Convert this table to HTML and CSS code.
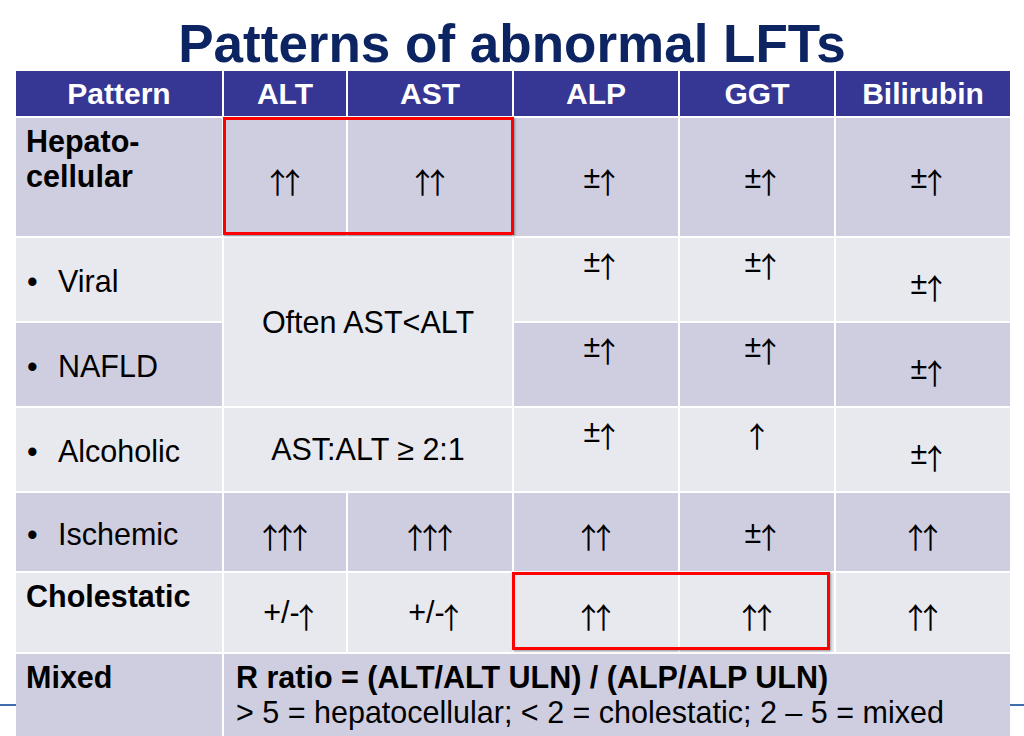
FILE: index.html
```html
<!DOCTYPE html>
<html lang="en">
<head>
<meta charset="utf-8">
<title>Patterns of abnormal LFTs</title>
<link rel="stylesheet" href="styles.css">
</head>
<body>
<div class="slide">
  <div class="rule"></div>
  <h1 class="title">Patterns of abnormal LFTs</h1>
  <div class="wrap">
    <table class="lft">
      <colgroup>
        <col class="w1"><col class="w2"><col class="w3"><col class="w4"><col class="w5"><col class="w6">
      </colgroup>
      <tr class="r-hdr">
        <th>Pattern</th><th>ALT</th><th>AST</th><th>ALP</th><th>GGT</th><th>Bilirubin</th>
      </tr>
      <tr class="r-hep d">
        <td class="lab">Hepato-<br>cellular</td>
        <td class="c sh"><span class="ar">↑↑</span></td>
        <td class="c sh"><span class="ar">↑↑</span></td>
        <td class="c"><span class="pm">±</span><span class="ar">↑</span></td>
        <td class="c"><span class="pm">±</span><span class="ar">↑</span></td>
        <td class="c"><span class="pm">±</span><span class="ar">↑</span></td>
      </tr>
      <tr class="r-mid l">
        <td class="bul"><span class="dot">•</span>Viral</td>
        <td class="c" colspan="2" rowspan="2">Often AST&lt;ALT</td>
        <td class="ct"><span class="pm">±</span><span class="ar">↑</span></td>
        <td class="ct"><span class="pm">±</span><span class="ar">↑</span></td>
        <td class="cb"><span class="pm">±</span><span class="ar">↑</span></td>
      </tr>
      <tr class="r-mid d">
        <td class="bul"><span class="dot">•</span>NAFLD</td>
        <td class="ct"><span class="pm">±</span><span class="ar">↑</span></td>
        <td class="ct"><span class="pm">±</span><span class="ar">↑</span></td>
        <td class="cb"><span class="pm">±</span><span class="ar">↑</span></td>
      </tr>
      <tr class="r-mid l">
        <td class="bul"><span class="dot">•</span>Alcoholic</td>
        <td class="c" colspan="2">AST:ALT ≥ 2:1</td>
        <td class="ct"><span class="pm">±</span><span class="ar">↑</span></td>
        <td class="ct sh"><span class="ar">↑</span></td>
        <td class="cb"><span class="pm">±</span><span class="ar">↑</span></td>
      </tr>
      <tr class="r-isc d">
        <td class="bul"><span class="dot">•</span>Ischemic</td>
        <td class="c sh"><span class="ar">↑↑↑</span></td>
        <td class="c sh"><span class="ar">↑↑↑</span></td>
        <td class="c sh"><span class="ar">↑↑</span></td>
        <td class="c"><span class="pm">±</span><span class="ar">↑</span></td>
        <td class="c sh"><span class="ar">↑↑</span></td>
      </tr>
      <tr class="r-cho l">
        <td class="lab">Cholestatic</td>
        <td class="c">+/<span class="hy">-</span><span class="ar">↑</span></td>
        <td class="c">+/<span class="hy">-</span><span class="ar">↑</span></td>
        <td class="c sh"><span class="ar">↑↑</span></td>
        <td class="c sh"><span class="ar">↑↑</span></td>
        <td class="c sh"><span class="ar">↑↑</span></td>
      </tr>
      <tr class="r-mix d">
        <td class="lab">Mixed</td>
        <td class="mix" colspan="5"><b>R ratio = (ALT/ALT ULN) / (ALP/ALP ULN)</b><br>&gt; 5 = hepatocellular; &lt; 2 = cholestatic; 2 – 5 = mixed</td>
      </tr>
    </table>
    <div class="hl hl-1"></div>
    <div class="hl hl-2"></div>
  </div>
</div>
</body>
</html>
```

FILE: styles.css
```css
html, body {
  margin: 0;
  padding: 0;
  background: #ffffff;
}

body {
  font-family: "Liberation Sans", Arial, Helvetica, sans-serif;
}

.slide {
  position: relative;
  width: 1024px;
  height: 736px;
  overflow: hidden;
}

.rule {
  position: absolute;
  left: 0;
  right: 0;
  top: 704px;
  height: 2px;
  background: #3f6fae;
}

.title {
  margin: 0;
  padding-top: 17px;
  height: 54px;
  line-height: 54px;
  text-align: center;
  font-size: 53px;
  font-weight: bold;
  color: #0c2461;
}

.wrap {
  position: relative;
  z-index: 1;
  margin-left: 16px;
  width: 994px;
}

.lft {
  border-collapse: collapse;
  border-style: hidden;
  table-layout: fixed;
  width: 994px;
  font-size: 30.5px;
  color: #000;
}

.w1 { width: 207px; }
.w2 { width: 124px; }
.w3 { width: 166px; }
.w4 { width: 166px; }
.w5 { width: 156px; }
.w6 { width: 175px; }

.lft th,
.lft td {
  border: 2px solid #ffffff;
  padding: 0;
  line-height: 35px;
}

.lft th {
  background: #363795;
  color: #ffffff;
  font-size: 30px;
  font-weight: bold;
  text-align: center;
  vertical-align: middle;
}

.r-hdr { height: 46px; }
.r-hep { height: 120px; }
.r-mid { height: 85px; }
.r-isc { height: 80px; }
.r-cho { height: 81px; }
.r-mix { height: 90px; }

.d td { background: #cfcee0; }
.l td { background: #e8e8ef; }

.lab {
  vertical-align: top;
  text-align: left;
  font-weight: bold;
  padding: 6px 0 0 10px !important;
}

.bul {
  vertical-align: middle;
  text-align: left;
  padding: 4px 0 0 11px !important;
}

.dot {
  display: inline-block;
  width: 31px;
}

.c {
  text-align: center;
  vertical-align: middle;
}

.ct {
  text-align: center;
  vertical-align: top;
  padding-top: 6px !important;
}

.cb {
  text-align: center;
  vertical-align: middle;
  padding-top: 8px !important;
}

/* cells holding only arrows: balance the arrow glyph's right-side ink */
.sh {
  padding-right: 14px !important;
}

.pm {
  letter-spacing: -7px;
}

.hy {
  letter-spacing: -8px;
}

.ar {
  font-family: "Noto Sans CJK SC", "Liberation Sans", sans-serif;
  font-size: 29px;
  line-height: 0;
  letter-spacing: -14px;
  vertical-align: -6px;
}

.mix {
  vertical-align: top;
  text-align: left;
  padding: 6px 0 0 12px !important;
}

.hl {
  position: absolute;
  box-sizing: border-box;
  border: 3px solid #ff0000;
  box-shadow: 1px 1px 2px rgba(0, 0, 0, 0.35);
}

.hl-1 {
  left: 207px;
  top: 46px;
  width: 291px;
  height: 118px;
}

.hl-2 {
  left: 496px;
  top: 501px;
  width: 318px;
  height: 78px;
}
```
